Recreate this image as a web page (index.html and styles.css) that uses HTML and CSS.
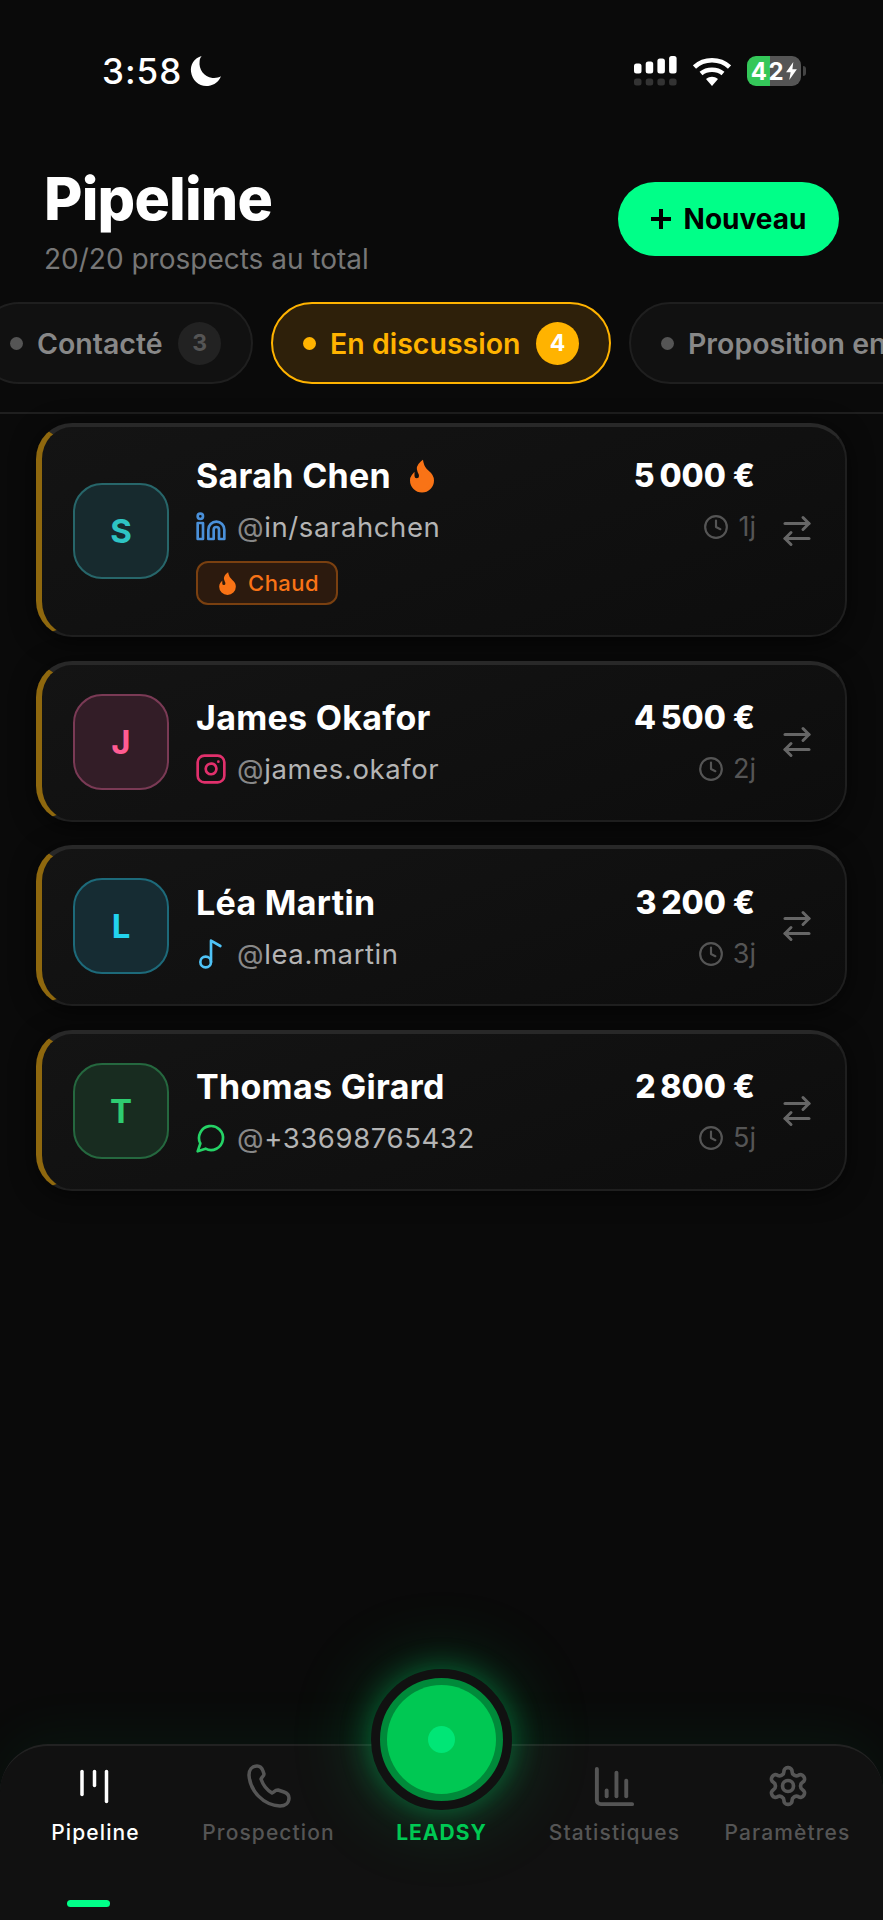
FILE: index.html

```html
<!DOCTYPE html>
<html lang="fr">
<head>
  <meta charset="UTF-8">
  <meta name="viewport" content="width=device-width, initial-scale=1">
  <title>Pipeline</title>
  <link rel="stylesheet" href="styles.css">
</head>
<body>

  <div class="app">
    <div class="statusbar">
      <div class="status-left">
        <span class="clock-time">3:58</span>
        <svg class="moon" viewBox="0 0 30 30"><path d="M11 1C4 3 0 9 1 16c1 8 8 14 16 13 6-.5 10-4 12-9-2 1-5 2-8 1.500C13 20.500 8 13 9 6c0-2 1-4 2-5z"/></svg>
      </div>
      <div class="status-right">
        <svg class="signal" viewBox="0 0 43 30">
          <rect x="0" y="7.500" width="7.500" height="10" rx="2.500"/>
          <rect x="11.700" y="5.500" width="7.500" height="12" rx="2.500"/>
          <rect x="23.400" y="2.500" width="7.500" height="15" rx="2.500"/>
          <rect x="35.100" y="0" width="7.500" height="17.500" rx="2.500"/>
          <g class="signal-off">
            <rect x="0" y="22.500" width="7.500" height="7" rx="2.500"/>
            <rect x="11.700" y="22.500" width="7.500" height="7" rx="2.500"/>
            <rect x="23.400" y="22.500" width="7.500" height="7" rx="2.500"/>
            <rect x="35.100" y="22.500" width="7.500" height="7" rx="2.500"/>
          </g>
        </svg>
        <svg class="wifi" viewBox="0 0 38 29">
          <path class="wifi-arc" d="M1.500 10C11 1 27 1 36.500 10"/>
          <path class="wifi-arc" d="M8 16.500c6-5 16-5 22 0"/>
          <path d="M13 22c4-3 8-3 12 0l-6 7z"/>
        </svg>
        <div class="battery">
          <span>42</span>
          <svg class="bolt" viewBox="0 0 12 20"><path d="M8 0 0 11.500h5L3.500 20 12 8H7z"/></svg>
        </div>
        <span class="battery-tip"></span>
      </div>
    </div>

    <div class="header">
      <div>
        <h1>Pipeline</h1>
        <p class="subtitle">20/20 prospects au total</p>
      </div>
      <button class="btn-new"><span class="plus"></span>Nouveau</button>
    </div>

    <div class="tabs">
      <div class="tab"><span class="dot"></span>Contacté<span class="count">3</span></div>
      <div class="tab active"><span class="dot"></span>En discussion<span class="count">4</span></div>
      <div class="tab"><span class="dot"></span>Proposition envoyée<span class="count">5</span></div>
    </div>
    <div class="divider"></div>

    <div class="list">
      <div class="card">
        <div class="avatar av-teal">S</div>
        <div class="info">
          <div class="row">
            <div class="name">Sarah Chen
              <svg class="flame" viewBox="0 0 24 24"><path d="M8.500 14.500A2.500 2.500 0 0 0 11 12c0-1.380-.5-2-1-3-1.072-2.143-.224-4.054 2-6 .5 2.500 2 4.900 4 6.500 2 1.600 3 3.500 3 5.500a7 7 0 1 1-14 0c0-1.153.433-2.294 1-3a2.500 2.500 0 0 0 2.500 2.500z"/></svg>
            </div>
            <div class="amount">5&#8239;000 €</div>
          </div>
          <div class="row row-sub">
            <div class="handle">
              <svg class="net net-linkedin" viewBox="0 0 24 24"><path d="M16 8a6 6 0 0 1 6 6v7h-4v-7a2 2 0 0 0-2-2 2 2 0 0 0-2 2v7h-4v-7a6 6 0 0 1 6-6z"/><rect x="2" y="9" width="4" height="12"/><circle cx="4" cy="4" r="2"/></svg>
              <span><span class="at">@</span>in/sarahchen</span>
            </div>
            <div class="age">
              <svg class="clock" viewBox="0 0 24 24"><circle cx="12" cy="12" r="10"/><path d="M12 6v6l4 2"/></svg>1j
            </div>
          </div>
          <div class="tag">
            <svg class="flame-small" viewBox="0 0 24 24"><path d="M8.500 14.500A2.500 2.500 0 0 0 11 12c0-1.380-.5-2-1-3-1.072-2.143-.224-4.054 2-6 .5 2.500 2 4.900 4 6.500 2 1.600 3 3.500 3 5.500a7 7 0 1 1-14 0c0-1.153.433-2.294 1-3a2.500 2.500 0 0 0 2.500 2.500z"/></svg>
            Chaud
          </div>
        </div>
        <svg class="swap" viewBox="0 0 24 24"><path d="m16 3 4 4-4 4"/><path d="M20 7H4"/><path d="m8 21-4-4 4-4"/><path d="M4 17h16"/></svg>
      </div>

      <div class="card">
        <div class="avatar av-pink">J</div>
        <div class="info">
          <div class="row">
            <div class="name">James Okafor</div>
            <div class="amount">4&#8239;500 €</div>
          </div>
          <div class="row row-sub">
            <div class="handle">
              <svg class="net net-instagram" viewBox="0 0 24 24"><rect x="2" y="2" width="20" height="20" rx="5"/><path d="M16 11.370A4 4 0 1 1 12.630 8 4 4 0 0 1 16 11.370z"/><path d="M17.500 6.500h.01"/></svg>
              <span><span class="at">@</span>james.okafor</span>
            </div>
            <div class="age">
              <svg class="clock" viewBox="0 0 24 24"><circle cx="12" cy="12" r="10"/><path d="M12 6v6l4 2"/></svg>2j
            </div>
          </div>
        </div>
        <svg class="swap" viewBox="0 0 24 24"><path d="m16 3 4 4-4 4"/><path d="M20 7H4"/><path d="m8 21-4-4 4-4"/><path d="M4 17h16"/></svg>
      </div>

      <div class="card">
        <div class="avatar av-cyan">L</div>
        <div class="info">
          <div class="row">
            <div class="name">Léa Martin</div>
            <div class="amount">3&#8239;200 €</div>
          </div>
          <div class="row row-sub">
            <div class="handle">
              <svg class="net net-tiktok" viewBox="0 0 24 24"><circle cx="8" cy="18" r="4"/><path d="M12 18V2l7 4"/></svg>
              <span><span class="at">@</span>lea.martin</span>
            </div>
            <div class="age">
              <svg class="clock" viewBox="0 0 24 24"><circle cx="12" cy="12" r="10"/><path d="M12 6v6l4 2"/></svg>3j
            </div>
          </div>
        </div>
        <svg class="swap" viewBox="0 0 24 24"><path d="m16 3 4 4-4 4"/><path d="M20 7H4"/><path d="m8 21-4-4 4-4"/><path d="M4 17h16"/></svg>
      </div>

      <div class="card">
        <div class="avatar av-green">T</div>
        <div class="info">
          <div class="row">
            <div class="name">Thomas Girard</div>
            <div class="amount">2&#8239;800 €</div>
          </div>
          <div class="row row-sub">
            <div class="handle">
              <svg class="net net-whatsapp" viewBox="0 0 24 24"><path d="M7.900 20A9 9 0 1 0 4 16.100L2 22z"/></svg>
              <span><span class="at">@</span>+33698765432</span>
            </div>
            <div class="age">
              <svg class="clock" viewBox="0 0 24 24"><circle cx="12" cy="12" r="10"/><path d="M12 6v6l4 2"/></svg>5j
            </div>
          </div>
        </div>
        <svg class="swap" viewBox="0 0 24 24"><path d="m16 3 4 4-4 4"/><path d="M20 7H4"/><path d="m8 21-4-4 4-4"/><path d="M4 17h16"/></svg>
      </div>
    </div>

    <div class="nav">
      <div class="nav-item current">
        <svg class="nav-icon nav-icon-thick" viewBox="0 0 44 44"><path d="M8 7.500v23"/><path d="M20.500 7.500v14"/><path d="M32.500 7.500v30"/></svg>
        <span>Pipeline</span>
      </div>
      <div class="nav-item">
        <svg class="nav-icon nav-icon-thick" viewBox="0 0 44 44"><path d="M2 11C2 6 5 2 10 2c3 0 5 2 6 5l1 3c0 2-2 3-3 5 2 6 6 11 11 14 2-1 3-3 6-3l6 2c3 1 5 3 5 6 0 5-4 8-9 8C16 41 3 27 2 11z"/></svg>
        <span>Prospection</span>
      </div>
      <div class="nav-item leadsy">
        <div class="fab"><div class="fab-core"><span class="fab-dot"></span></div></div>
        <span class="nav-spacer"></span>
        <span>LEADSY</span>
      </div>
      <div class="nav-item">
        <svg class="nav-icon nav-icon-chart" viewBox="0 0 24 24"><path d="M3 3v16a2 2 0 0 0 2 2h16"/><path d="M18 17V9"/><path d="M13 17V5"/><path d="M8 17v-3"/></svg>
        <span>Statistiques</span>
      </div>
      <div class="nav-item">
        <svg class="nav-icon" viewBox="0 0 24 24"><path d="M12.220 2h-.44a2 2 0 0 0-2 2v.18a2 2 0 0 1-1 1.730l-.43.25a2 2 0 0 1-2 0l-.15-.08a2 2 0 0 0-2.730.73l-.22.38a2 2 0 0 0 .73 2.730l.15.1a2 2 0 0 1 1 1.720v.51a2 2 0 0 1-1 1.740l-.15.09a2 2 0 0 0-.73 2.730l.22.38a2 2 0 0 0 2.730.73l.15-.08a2 2 0 0 1 2 0l.43.25a2 2 0 0 1 1 1.730V20a2 2 0 0 0 2 2h.44a2 2 0 0 0 2-2v-.18a2 2 0 0 1 1-1.730l.43-.25a2 2 0 0 1 2 0l.15.08a2 2 0 0 0 2.730-.73l.22-.39a2 2 0 0 0-.73-2.730l-.15-.08a2 2 0 0 1-1-1.740v-.5a2 2 0 0 1 1-1.740l.15-.09a2 2 0 0 0 .73-2.730l-.22-.38a2 2 0 0 0-2.730-.73l-.15.08a2 2 0 0 1-2 0l-.43-.25a2 2 0 0 1-1-1.730V4a2 2 0 0 0-2-2z"/><circle cx="12" cy="12" r="3"/></svg>
        <span>Paramètres</span>
      </div>
      <span class="nav-indicator"></span>
    </div>
  </div>

</body>
</html>
```

FILE: styles.css

```css
* {
  box-sizing: border-box;
}
body {
  margin: 0;
  background: #0a0a0a;
  font-family: Inter, "Liberation Sans", sans-serif;
  color: #fff;
}
.app {
  width: 883px;
  height: 1920px;
  overflow: hidden;
  display: flex;
  flex-direction: column;
}

/* status bar */
.statusbar {
  height: 142px;
  flex-shrink: 0;
  display: flex;
  justify-content: space-between;
  align-items: center;
  padding: 0 77px 0 102px;
}
.status-left {
  display: flex;
  align-items: center;
  gap: 8px;
}
.clock-time {
  font-size: 35px;
  font-weight: 500;
  line-height: 1;
  letter-spacing: 1px;
}
.moon {
  width: 32px;
  height: 32px;
  fill: #fff;
}
.status-right {
  display: flex;
  align-items: center;
}
.signal {
  width: 43px;
  height: 30px;
  fill: #fff;
  margin-right: 16px;
}
.signal-off {
  fill: #333;
}
.wifi {
  width: 38px;
  height: 29px;
  fill: #fff;
  margin-right: 16px;
}
.wifi-arc {
  fill: none;
  stroke: #fff;
  stroke-width: 4.500;
}
.battery {
  width: 54px;
  height: 30px;
  border-radius: 9px;
  background: linear-gradient(90deg, #34c759 42%, #555 42%);
  display: flex;
  align-items: center;
  justify-content: center;
  gap: 1px;
  font-size: 24px;
  font-weight: 700;
  letter-spacing: 1.5px;
}
.bolt {
  width: 11px;
  height: 18px;
  fill: #fff;
}
.battery-tip {
  width: 3px;
  height: 10px;
  margin-left: 2px;
  background: #444;
  border-radius: 0 3px 3px 0;
}

/* header */
.header {
  display: flex;
  justify-content: space-between;
  align-items: center;
  margin-top: 22px;
  padding: 0 44px;
}
h1 {
  margin: 0;
  font-size: 59px;
  font-weight: 800;
  line-height: 1.2;
  letter-spacing: -0.8px;
}
.subtitle {
  margin: 8px 0 0;
  font-size: 28px;
  line-height: 1.2;
  color: #777;
}
.btn-new {
  width: 221px;
  height: 74px;
  margin-top: -3px;
  border: none;
  border-radius: 37px;
  background: #00ff88;
  color: #000;
  font-family: inherit;
  font-size: 28px;
  font-weight: 700;
  display: flex;
  align-items: center;
  justify-content: center;
  gap: 13px;
}
.plus {
  width: 20px;
  height: 20px;
  background:
    linear-gradient(#000, #000) center / 100% 4px no-repeat,
    linear-gradient(#000, #000) center / 4px 100% no-repeat;
}

/* stage tabs */
.tabs {
  display: flex;
  gap: 18px;
  margin: 26px 0 0 -22px;
}
.tab {
  flex-shrink: 0;
  height: 82px;
  padding: 0 30px;
  display: flex;
  align-items: center;
  gap: 14px;
  border: 2px solid #1f1f1f;
  border-radius: 41px;
  background: #111;
  color: #888;
  font-size: 28.500px;
  font-weight: 600;
  white-space: nowrap;
}
.dot {
  width: 13px;
  height: 13px;
  border-radius: 50%;
  background: #555;
}
.count {
  width: 43px;
  height: 43px;
  margin-left: 1.500px;
  border-radius: 50%;
  background: #222;
  color: #555;
  font-size: 23px;
  font-weight: 700;
  display: flex;
  align-items: center;
  justify-content: center;
}
.tab.active {
  border-color: #ffb300;
  background: #2e200a;
  color: #ffb300;
}
.tab.active .dot {
  background: #ffb300;
}
.tab.active .count {
  background: #ffb300;
  color: #fff;
}
.divider {
  height: 2px;
  margin-top: 28px;
  background: #1f1f1f;
  flex-shrink: 0;
}

/* prospect cards */
.list {
  display: flex;
  flex-direction: column;
  gap: 23.500px;
  padding: 9px 36px 0;
}
.card {
  display: flex;
  align-items: center;
  padding: 29px 30px 30px 31px;
  border: 2px solid #1f1f1f;
  border-top: 4px solid #282828;
  border-left: 6px solid #8f680e;
  border-radius: 36px;
  background: linear-gradient(160deg, #141414, #0d0d0d);
  box-shadow: 0 4px 24px rgba(0,0,0,0.6);
}
.avatar {
  width: 96px;
  height: 96px;
  flex-shrink: 0;
  margin-right: 27px;
  border: 2.5px solid;
  border-radius: 29px;
  display: flex;
  align-items: center;
  justify-content: center;
  font-size: 33px;
  font-weight: 700;
}
.av-teal { background: #172a2e; border-color: #27666a; color: #2ec4c4; }
.av-pink { background: #331d27; border-color: #7a3a55; color: #ff5c93; }
.av-cyan { background: #162c33; border-color: #1d6a7a; color: #22d3ee; }
.av-green { background: #182c20; border-color: #25683f; color: #2ecc71; }
.info {
  flex: 1;
  min-width: 0;
}
.row {
  display: flex;
  justify-content: space-between;
  align-items: center;
}
.row-sub {
  margin-top: 15px;
}
.name {
  display: flex;
  align-items: center;
  gap: 13px;
  height: 40px;
  font-size: 34px;
  font-weight: 700;
  line-height: 40px;
  letter-spacing: 0.3px;
}
.flame {
  width: 36px;
  height: 36px;
  fill: #f97316;
  stroke: #f97316;
  stroke-width: 2;
}
.amount {
  font-size: 32px;
  font-weight: 800;
  line-height: 40px;
  letter-spacing: 2.600px;
  margin-right: 1px;
}
.handle {
  display: flex;
  align-items: center;
  gap: 10px;
  height: 32px;
  margin-left: -1px;
  font-size: 27.500px;
  letter-spacing: 0.6px;
  color: #b4b4b4;
}
.at {
  color: #888;
}
.net {
  width: 32px;
  height: 32px;
  fill: none;
  stroke-width: 2;
  stroke-linecap: round;
  stroke-linejoin: round;
}
.net-linkedin { stroke: #4a90d9; }
.net-instagram { stroke: #e1306c; }
.net-tiktok { stroke: #4fc3f7; }
.net-whatsapp { stroke: #25d366; }
.age {
  display: flex;
  align-items: center;
  gap: 9px;
  height: 32px;
  font-size: 27px;
  line-height: 32px;
  color: #555;
}
.clock {
  width: 26px;
  height: 26px;
  fill: none;
  stroke: #555;
  stroke-width: 2;
  stroke-linecap: round;
  stroke-linejoin: round;
}
.tag {
  display: flex;
  align-items: center;
  gap: 8px;
  width: 142px;
  height: 44px;
  margin-top: 18px;
  padding-left: 17px;
  border: 2px solid #7a4010;
  border-radius: 12px;
  background: #2c1a0e;
  color: #f97316;
  font-size: 22px;
  font-weight: 500;
  letter-spacing: 0.5px;
}
.flame-small {
  width: 25px;
  height: 25px;
  fill: #f97316;
  stroke: #f97316;
  stroke-width: 2;
}
.swap {
  width: 36px;
  height: 36px;
  flex-shrink: 0;
  margin-left: 23px;
  fill: none;
  stroke: #666;
  stroke-width: 2;
  stroke-linecap: round;
  stroke-linejoin: round;
}

/* bottom nav */
.nav {
  position: relative;
  margin-top: auto;
  height: 176px;
  flex-shrink: 0;
  display: flex;
  padding: 18px 9px 0;
  border-top: 2px solid #222;
  border-radius: 48px 48px 0 0;
  background: #111;
  box-shadow: 0 -10px 60px rgba(0,255,136,0.05);
}
.nav-item {
  position: relative;
  flex: 1;
  display: flex;
  flex-direction: column;
  align-items: center;
  gap: 12px;
  color: #555;
  font-size: 21px;
  font-weight: 500;
  letter-spacing: 1.100px;
  line-height: 25px;
}
.nav-icon {
  width: 44px;
  height: 44px;
  fill: none;
  stroke: #555;
  stroke-width: 2;
  stroke-linecap: round;
  stroke-linejoin: round;
}
.nav-icon-thick {
  stroke-width: 3.500;
}
.nav-icon-chart {
  width: 47px;
  height: 47px;
  margin: -1.500px 0;
}
.current {
  color: #fff;
}
.current .nav-icon {
  stroke: #fff;
}
.leadsy {
  color: #00c853;
  font-weight: 700;
  letter-spacing: 1px;
}
.nav-spacer {
  height: 44px;
}
.fab {
  position: absolute;
  top: -95px;
  left: 50%;
  width: 141px;
  height: 141px;
  margin-left: -70.500px;
  border: 9px solid #111;
  border-radius: 50%;
  background: #008a3a;
  box-shadow: 0 0 30px rgba(0,230,110,0.35), 0 0 80px rgba(0,230,110,0.25);
  display: flex;
  align-items: center;
  justify-content: center;
}
.fab-core {
  width: 109px;
  height: 109px;
  border-radius: 50%;
  background: #00c853;
  display: flex;
  align-items: center;
  justify-content: center;
}
.fab-dot {
  width: 27px;
  height: 27px;
  border-radius: 50%;
  background: #00e676;
}
.nav-indicator {
  position: absolute;
  left: 67px;
  bottom: 13px;
  width: 43px;
  height: 7px;
  border-radius: 4px;
  background: #00ff88;
}
```
